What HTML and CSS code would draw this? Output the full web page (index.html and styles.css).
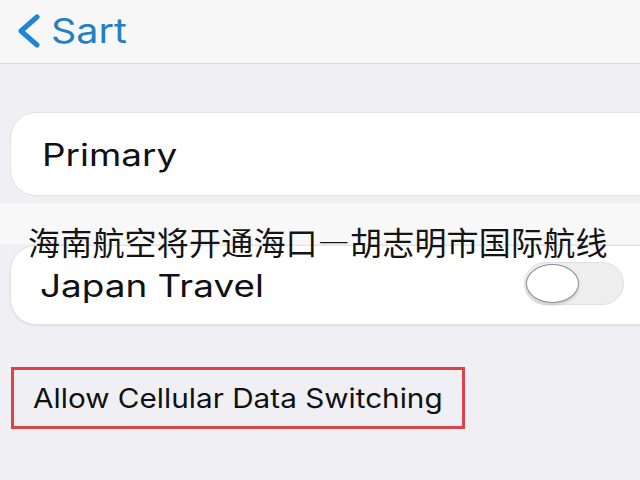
FILE: index.html
```html
<!DOCTYPE html>
<html lang="zh-CN">
<head>
  <meta charset="UTF-8" />
  <meta name="viewport" content="width=device-width, initial-scale=1.0"/>
  <title>Cellular Data</title>
  <link rel="stylesheet" href="styles.css">
</head>
<body>

  <!-- Top navigation bar -->
  <div class="navbar">
    <a class="back" href="#">
      <svg class="chevron" width="28" height="34" viewBox="0 0 28 34">
        <polyline points="23,3 7,17 23,31" fill="none" stroke="#1f86d4" stroke-width="5" stroke-linecap="round" stroke-linejoin="round"/>
      </svg>
      <span class="label">Sart</span>
    </a>
  </div>

  <div class="content">
    <div class="card primary">
      <span class="label">Primary</span>
    </div>

    <!-- Headline strip laid over the list -->
    <div class="caption">
      <span>海南航空将开通海口—胡志明市国际航线</span>
    </div>

    <div class="card travel">
      <span class="label">Japan Travel</span>
      <div class="switch"><div class="knob"></div></div>
    </div>

    <div class="option">
      <span class="label">Allow Cellular Data Switching</span>
    </div>
  </div>

</body>
</html>
```

FILE: styles.css
```css
* {
  box-sizing: border-box;
}

body {
  margin: 0;
  width: 640px;
  height: 480px;
  overflow: hidden;
  background-color: #efeff4;
  font-family: Inter, "DejaVu Sans", sans-serif;
  color: #111;
  position: relative;
}

/* wide-set labels */
.label {
  display: inline-block;
  transform-origin: left center;
  transform: scaleX(1.19);
  white-space: nowrap;
}

.navbar {
  height: 64px;
  background-color: #f7f7f7;
  border-bottom: 1px solid #dadada;
  display: flex;
  align-items: center;
  padding-left: 14px;
}

.back {
  display: flex;
  align-items: center;
  gap: 9px;
  text-decoration: none;
  color: #2380c2;
  font-size: 34px;
  margin-top: -2px;
}

.back .label {
  transform: scaleX(1.16);
}

.content {
  padding-top: 48px;
  display: flex;
  flex-direction: column;
}

.card {
  background: white;
  margin-left: 10px;
  margin-right: -40px;
  border-radius: 26px;
  border: 1px solid #e2e2e6;
  display: flex;
  align-items: center;
}

.primary {
  height: 84px;
  padding-left: 31px;
  font-size: 31px;
}

.travel {
  margin-top: 49px;
  height: 80px;
  padding-left: 29px;
  padding-right: 55px;
  justify-content: space-between;
  font-size: 31px;
  box-shadow: 0 1px 2px rgba(0, 0, 0, 0.08);
}

.switch {
  width: 100px;
  height: 43px;
  margin-top: -3px;
  border-radius: 22px;
  background: #eeeeee;
  border: 1px solid #e0e0e0;
  padding: 1px;
  display: flex;
}

.knob {
  width: 53px;
  height: 39px;
  border-radius: 50%;
  background: white;
  border: 1.5px solid #8e8e8e;
  box-shadow: 0 2px 3px rgba(0, 0, 0, 0.15);
}

.caption {
  position: absolute;
  left: 0;
  top: 203px;
  width: 640px;
  height: 41px;
  background: #f8f8f8;
}

.caption span {
  position: absolute;
  left: 28px;
  top: 16px;
  font-family: "Noto Sans CJK SC", sans-serif;
  font-size: 32px;
  letter-spacing: 0.2px;
  line-height: 44px;
  color: #141414;
  white-space: nowrap;
}

.option {
  margin-top: 42px;
  margin-left: 11px;
  width: 454px;
  height: 62px;
  border: 3px solid #d9444d;
  display: flex;
  align-items: center;
  padding-left: 19px;
  font-size: 27px;
}

.option .label {
  transform: scaleX(1.1);
}
```
